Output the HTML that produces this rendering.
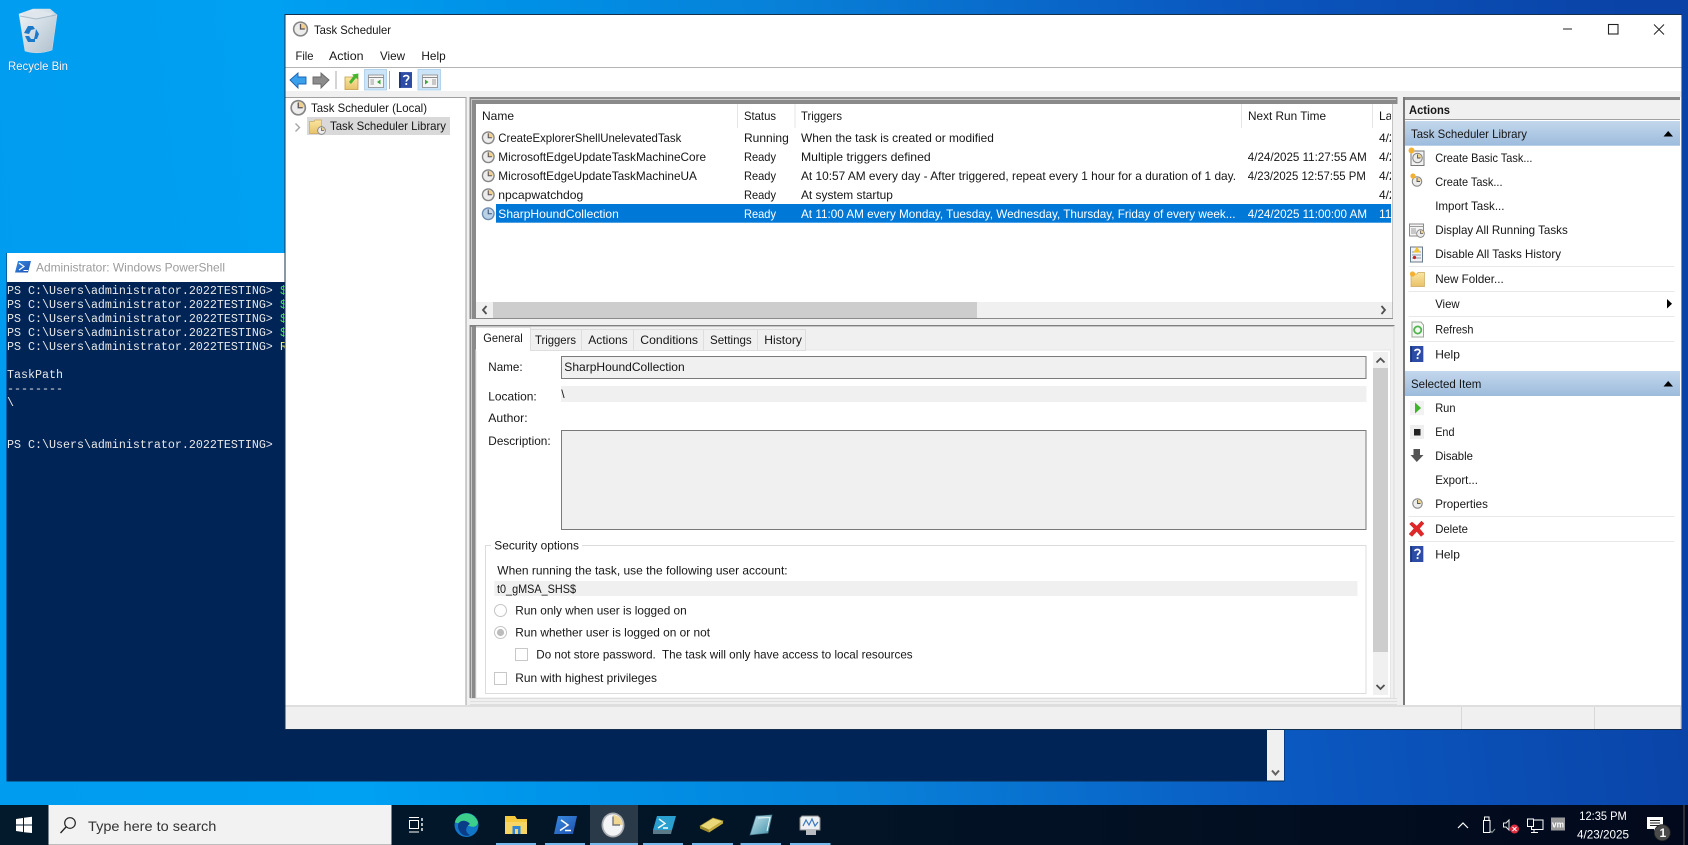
<!DOCTYPE html>
<html lang="en">
<head>
<meta charset="utf-8">
<title>Task Scheduler</title>
<style>
html,body{margin:0;padding:0;width:1688px;height:845px;overflow:hidden;background:#0a5ac4}
svg{display:block;filter:blur(.3px)}
text{font-family:"Liberation Sans",sans-serif;font-size:12px;fill:#161616;white-space:pre}
.m{font-family:"Liberation Mono",monospace;font-size:11.67px;fill:#e8e8e8}
.w{fill:#fff}
</style>
</head>
<body>
<svg xmlns="http://www.w3.org/2000/svg" width="1688" height="845" viewBox="0 0 1688 845">
<defs>
<linearGradient id="wall" gradientUnits="userSpaceOnUse" x1="0" y1="600" x2="1688" y2="400">
<stop offset="0" stop-color="#009cf0"/><stop offset=".2" stop-color="#00a0f2"/><stop offset=".35" stop-color="#0090e6"/><stop offset=".5" stop-color="#0880d8"/><stop offset=".75" stop-color="#0a58c0"/><stop offset="1" stop-color="#0a42a6"/>
</linearGradient>
<linearGradient id="tb" x1="0" y1="0" x2="1" y2="0"><stop offset="0" stop-color="#021a2c"/><stop offset=".5" stop-color="#021426"/><stop offset="1" stop-color="#02091c"/></linearGradient>
<linearGradient id="sec" x1="0" y1="0" x2="0" y2="1"><stop offset="0" stop-color="#c3d7ec"/><stop offset="1" stop-color="#9cbbdc"/></linearGradient>
<linearGradient id="bin" x1="0" y1="0" x2="1" y2="1"><stop offset="0" stop-color="#f0f5f9"/><stop offset="1" stop-color="#aebfcc"/></linearGradient>
<linearGradient id="ps" x1="0" y1="0" x2="1" y2="1"><stop offset="0" stop-color="#3a8de0"/><stop offset="1" stop-color="#1c4fb0"/></linearGradient>
<linearGradient id="fold" x1="0" y1="0" x2="0" y2="1"><stop offset="0" stop-color="#fbe6a2"/><stop offset="1" stop-color="#e8c268"/></linearGradient>
<linearGradient id="note" x1="0" y1="0" x2="1" y2="1"><stop offset="0" stop-color="#c8e8f0"/><stop offset="1" stop-color="#3f8ea8"/></linearGradient>
<symbol id="clk" viewBox="0 0 20 20">
<circle cx="10" cy="10" r="9.6" fill="#858585"/><circle cx="10" cy="10" r="7.6" fill="#ececec"/>
<path d="M10 10V2.8A7.2 7.2 0 0 1 17.2 10Z" fill="#f0d08e"/>
<path d="M10 3.6V10H15.4" fill="none" stroke="#555" stroke-width="1.6"/>
</symbol>
<symbol id="clks" viewBox="0 0 20 20">
<circle cx="10" cy="10" r="9.6" fill="#6d8db0"/><circle cx="10" cy="10" r="7.6" fill="#b9d2ea"/>
<path d="M10 10V2.8A7.2 7.2 0 0 1 17.2 10Z" fill="#c9d8e6"/>
<path d="M10 3.6V10H15.4" fill="none" stroke="#3c5878" stroke-width="1.6"/>
</symbol>
<symbol id="helpb" viewBox="0 0 14 17">
<rect width="14" height="17" fill="#2c4ca6"/><rect x="0" width="2" height="17" fill="#1c3580"/>
<path d="M5 5.4C5 3.2 10.4 3 10.4 5.8 10.4 7.8 7.8 7.8 7.8 10.2" fill="none" stroke="#fff" stroke-width="1.8"/>
<rect x="6.9" y="11.8" width="1.9" height="2.1" fill="#fff"/>
</symbol>
<clipPath id="listc"><rect x="476" y="104" width="915" height="198"/></clipPath>
<clipPath id="psc"><rect x="7" y="282" width="278" height="80"/></clipPath>
</defs>

<!-- wallpaper -->
<rect width="1688" height="845" fill="url(#wall)"/>

<!-- recycle bin -->
<path d="M19 14L33 9H50L57 15L52 50Q38 55 25 51Z" fill="url(#bin)" stroke="#cfdbe4" stroke-width=".6"/>
<path d="M22 13L28 11L33 12L40 10L46 12L53 13L50 17L38 19L24 17Z" fill="#dfe6ec"/>
<path d="M20 16L36 19L56 15" fill="none" stroke="#a8bac8"/>
<path d="M24 33L28 26H33L35 29L31 30L29 34ZM36 29L39 34L37 39L34 39L35 35ZM25 36L29 36L31 39H35V42H28Z" fill="#1c78c8"/>
<text x="8" y="70" textLength="60" lengthAdjust="spacingAndGlyphs" class="w" style="paint-order:stroke;stroke:#0a6cb4;stroke-width:.5px">Recycle Bin</text>

<!-- PowerShell window -->
<rect x="6.5" y="253" width="1278" height="528" fill="#012456"/>
<rect x="6.5" y="780.5" width="1278" height="1" fill="#0a2a50"/>
<rect x="7" y="253" width="1277" height="29" fill="#fff"/>
<rect x="1267" y="282" width="17" height="498.5" fill="#f0f0f0"/>
<path d="M1272 770.5L1275.5 774.5L1279 770.5" fill="none" stroke="#606060" stroke-width="2"/>
<path d="M18 261H31L28 272.5H15Z" fill="url(#ps)"/>
<path d="M19 263L24 266.5L19 270M23.5 270.5H28" fill="none" stroke="#fff" stroke-width="1.1"/>
<text x="36" y="271.5" textLength="189" lengthAdjust="spacingAndGlyphs" style="fill:#9c9c9c">Administrator: Windows PowerShell</text>
<text class="m" x="7" y="294">PS C:\Users\administrator.2022TESTING&gt;</text>
<text class="m" x="7" y="308">PS C:\Users\administrator.2022TESTING&gt;</text>
<text class="m" x="7" y="322">PS C:\Users\administrator.2022TESTING&gt;</text>
<text class="m" x="7" y="336">PS C:\Users\administrator.2022TESTING&gt;</text>
<text class="m" x="7" y="350">PS C:\Users\administrator.2022TESTING&gt;</text>
<g clip-path="url(#psc)">
<text class="m" x="280" y="294" style="fill:#4cf04c">$</text>
<text class="m" x="280" y="308" style="fill:#4cf04c">$</text>
<text class="m" x="280" y="322" style="fill:#4cf04c">$</text>
<text class="m" x="280" y="336" style="fill:#4cf04c">$</text>
<text class="m" x="280" y="350" style="fill:#f4f45a">R</text>
</g>
<text class="m" x="7" y="378">TaskPath</text>
<text class="m" x="7" y="392">--------</text>
<text class="m" x="7" y="406">\</text>
<text class="m" x="7" y="448">PS C:\Users\administrator.2022TESTING&gt;</text>

<!-- Task Scheduler window -->
<rect x="284.5" y="14" width="1397.5" height="716" fill="#14304e"/>
<rect x="285.5" y="15" width="1396" height="714" fill="#f0f0f0"/>
<rect x="285.5" y="15" width="1396" height="76" fill="#fff"/>
<rect x="285.5" y="67" width="1396" height="1" fill="#b4b4b4"/>
<use href="#clk" x="292.5" y="21" width="16" height="16"/>
<text x="314" y="34" textLength="77" lengthAdjust="spacingAndGlyphs">Task Scheduler</text>
<path d="M1563 29H1572" stroke="#222" stroke-width="1"/>
<rect x="1608.5" y="24.5" width="9.5" height="9.5" fill="none" stroke="#222" stroke-width="1.1"/>
<path d="M1654 24.5L1664 34.5M1664 24.5L1654 34.5" stroke="#222" stroke-width="1"/>
<text x="295.5" y="60" textLength="18" lengthAdjust="spacingAndGlyphs">File</text>
<text x="329" y="60" textLength="34.5" lengthAdjust="spacingAndGlyphs">Action</text>
<text x="380" y="60" textLength="25" lengthAdjust="spacingAndGlyphs">View</text>
<text x="421.4" y="60" textLength="24.3" lengthAdjust="spacingAndGlyphs">Help</text>

<!-- toolbar -->
<path d="M290 80L298 73V77H306V84H298V88Z" fill="#3aa0ec" stroke="#1664b4" stroke-width=".9"/>
<path d="M329 80L321 73V77H313V84H321V88Z" fill="#8c8c8c" stroke="#666" stroke-width=".9"/>
<rect x="335.5" y="71" width="1" height="18" fill="#a8a8a8"/>
<path d="M345 77H358V89.5H345Z" fill="url(#fold)" stroke="#c09a48" stroke-width=".8"/>
<path d="M349 82L353.5 76L352 74.5L358.5 73.5L358 79.5L356 78L351 84Z" fill="#46b52e"/>
<rect x="364.5" y="69.5" width="22" height="20.5" fill="#cce4f7" stroke="#a6cdea" stroke-width=".8"/>
<rect x="368.5" y="75" width="15" height="12.5" fill="#f6f6f6" stroke="#8a8a8a" stroke-width=".8"/>
<path d="M368.5 77.5H383.5" stroke="#8a8a8a"/>
<path d="M370.5 80H374M370.5 82H374M370.5 84H374" stroke="#999"/>
<path d="M380.5 79.5L377 82L380.5 84.5Z" fill="#38a838"/>
<rect x="389" y="71" width="1" height="18" fill="#a8a8a8"/>
<use href="#helpb" x="399" y="72" width="13" height="16"/>
<rect x="418" y="69.5" width="22.5" height="20.5" fill="#cce4f7" stroke="#a6cdea" stroke-width=".8"/>
<rect x="422.5" y="75" width="15" height="12.5" fill="#f6f6f6" stroke="#8a8a8a" stroke-width=".8"/>
<path d="M422.5 77.5H437.5" stroke="#8a8a8a"/>
<path d="M432 80H436M432 82H436M432 84H436" stroke="#999"/>
<path d="M425 79.5L428.5 82L425 84.5Z" fill="#38a838"/>

<!-- tree pane -->
<rect x="285.5" y="97" width="181" height="609" fill="#a0a0a0"/>
<rect x="285.5" y="98" width="180" height="607" fill="#fff"/>
<use href="#clk" x="290" y="99.5" width="16.5" height="16.5"/>
<text x="311" y="112" textLength="116" lengthAdjust="spacingAndGlyphs">Task Scheduler (Local)</text>
<path d="M295.5 123.5L299.5 127.5L295.5 131.5" fill="none" stroke="#a6a6a6" stroke-width="1.4"/>
<rect x="307" y="117" width="143" height="18" fill="#d9d9d9"/>
<path d="M309.5 121.5H314L315 120H321.5V133.5H309.5Z" fill="url(#fold)" stroke="#c9a85c" stroke-width=".7"/>
<use href="#clk" x="317" y="126" width="9" height="9"/>
<text x="330" y="130" textLength="116" lengthAdjust="spacingAndGlyphs">Task Scheduler Library</text>

<!-- middle pane frame -->
<rect x="469.5" y="97" width="928" height="222" fill="#8a8a8a"/>
<rect x="471" y="99" width="925" height="1" fill="#c8c8c8"/>
<rect x="471" y="99" width="1" height="220" fill="#c8c8c8"/>
<rect x="1393" y="104" width="4.5" height="215" fill="#f0f0f0"/>
<rect x="476" y="104" width="916.5" height="214" fill="#fff"/>
<rect x="476" y="318" width="917" height="1" fill="#8a8a8a"/>
<path d="M737.5 104V128M795 104V128M1241.5 104V128M1372.5 104V128" stroke="#e5e5e5"/>
<g clip-path="url(#listc)">
<rect x="496" y="204" width="896.5" height="18.7" fill="#0078d7"/>
<text x="482" y="120" textLength="32" lengthAdjust="spacingAndGlyphs">Name</text>
<text x="744" y="120" textLength="32" lengthAdjust="spacingAndGlyphs">Status</text>
<text x="801" y="120" textLength="41" lengthAdjust="spacingAndGlyphs">Triggers</text>
<text x="1248" y="120" textLength="78" lengthAdjust="spacingAndGlyphs">Next Run Time</text>
<text x="1379" y="120">Last Run Time</text>
<use href="#clk" x="481.5" y="131" width="13.5" height="13.5"/>
<use href="#clk" x="481.5" y="150" width="13.5" height="13.5"/>
<use href="#clk" x="481.5" y="169" width="13.5" height="13.5"/>
<use href="#clk" x="481.5" y="188" width="13.5" height="13.5"/>
<use href="#clks" x="481.5" y="207" width="13.5" height="13.5"/>
<text x="498.3" y="142" textLength="183" lengthAdjust="spacingAndGlyphs">CreateExplorerShellUnelevatedTask</text>
<text x="498.3" y="161" textLength="207.8" lengthAdjust="spacingAndGlyphs">MicrosoftEdgeUpdateTaskMachineCore</text>
<text x="498.3" y="180" textLength="198.6" lengthAdjust="spacingAndGlyphs">MicrosoftEdgeUpdateTaskMachineUA</text>
<text x="498.3" y="199" textLength="85" lengthAdjust="spacingAndGlyphs">npcapwatchdog</text>
<text x="498.3" y="218" textLength="120.5" lengthAdjust="spacingAndGlyphs" class="w">SharpHoundCollection</text>
<text x="744" y="142" textLength="44.8" lengthAdjust="spacingAndGlyphs">Running</text>
<text x="744" y="161" textLength="32" lengthAdjust="spacingAndGlyphs">Ready</text>
<text x="744" y="180" textLength="32" lengthAdjust="spacingAndGlyphs">Ready</text>
<text x="744" y="199" textLength="32" lengthAdjust="spacingAndGlyphs">Ready</text>
<text x="744" y="218" textLength="32" lengthAdjust="spacingAndGlyphs" class="w">Ready</text>
<text x="801" y="142" textLength="192.9" lengthAdjust="spacingAndGlyphs">When the task is created or modified</text>
<text x="801" y="161" textLength="129.7" lengthAdjust="spacingAndGlyphs">Multiple triggers defined</text>
<text x="801" y="180" textLength="435" lengthAdjust="spacingAndGlyphs">At 10:57 AM every day - After triggered, repeat every 1 hour for a duration of 1 day.</text>
<text x="801" y="199" textLength="91.9" lengthAdjust="spacingAndGlyphs">At system startup</text>
<text x="801" y="218" textLength="434.5" lengthAdjust="spacingAndGlyphs" class="w">At 11:00 AM every Monday, Tuesday, Wednesday, Thursday, Friday of every week...</text>
<text x="1247.8" y="161" textLength="119" lengthAdjust="spacingAndGlyphs">4/24/2025 11:27:55 AM</text>
<text x="1247.8" y="180" textLength="118" lengthAdjust="spacingAndGlyphs">4/23/2025 12:57:55 PM</text>
<text x="1247.8" y="218" textLength="119.2" lengthAdjust="spacingAndGlyphs" class="w">4/24/2025 11:00:00 AM</text>
<text x="1379" y="142">4/23/2025</text>
<text x="1379" y="161">4/23/2025</text>
<text x="1379" y="180">4/23/2025</text>
<text x="1379" y="199">4/23/2025</text>
<text x="1379" y="218" class="w">11/30/1999</text>
</g>
<rect x="476" y="302" width="916.5" height="16" fill="#f0f0f0"/>
<rect x="493" y="302" width="484" height="16" fill="#cdcdcd"/>
<path d="M486.5 306L483 310L486.5 314" fill="none" stroke="#505050" stroke-width="1.8"/>
<path d="M1381.5 306L1385 310L1381.5 314" fill="none" stroke="#505050" stroke-width="1.8"/>

<!-- bottom pane frame -->
<rect x="469.5" y="325" width="6.5" height="379" fill="#8a8a8a"/>
<rect x="471" y="327" width="1" height="375" fill="#c8c8c8"/>
<rect x="469.5" y="325" width="925" height="1.4" fill="#808080"/>
<rect x="476" y="326.5" width="917.5" height="377" fill="#f0f0f0"/>
<rect x="1393.5" y="326" width="1" height="375" fill="#dcdcdc"/>
<rect x="476" y="350" width="914.5" height="348" fill="#fff" stroke="#e6e6e6" stroke-width="1"/>
<rect x="469.5" y="698" width="928" height="7" fill="#f0f0f0"/>
<path d="M470 698.5H1397M470 701.5H1397M470 704.5H1397" stroke="#dedede" stroke-width="1"/>
<!-- tabs -->
<rect x="530.5" y="329.5" width="51" height="21" fill="#f0f0f0" stroke="#dedede"/>
<rect x="581.5" y="329.5" width="52" height="21" fill="#f0f0f0" stroke="#dedede"/>
<rect x="633.5" y="329.5" width="70" height="21" fill="#f0f0f0" stroke="#dedede"/>
<rect x="703.5" y="329.5" width="54" height="21" fill="#f0f0f0" stroke="#dedede"/>
<rect x="757.5" y="329.5" width="48" height="21" fill="#f0f0f0" stroke="#dedede"/>
<rect x="476" y="327" width="54.5" height="24" fill="#fff"/>
<path d="M476 327.5H530.5V351" fill="none" stroke="#dedede"/>
<text x="483.3" y="342" textLength="39.4" lengthAdjust="spacingAndGlyphs">General</text>
<text x="535" y="344" textLength="41" lengthAdjust="spacingAndGlyphs">Triggers</text>
<text x="588.3" y="344" textLength="39.4" lengthAdjust="spacingAndGlyphs">Actions</text>
<text x="640.3" y="344" textLength="57.7" lengthAdjust="spacingAndGlyphs">Conditions</text>
<text x="710" y="344" textLength="41.7" lengthAdjust="spacingAndGlyphs">Settings</text>
<text x="764.3" y="344" textLength="37.7" lengthAdjust="spacingAndGlyphs">History</text>
<!-- general -->
<text x="488.3" y="371" textLength="34.3" lengthAdjust="spacingAndGlyphs">Name:</text>
<rect x="561.5" y="356.5" width="804.5" height="22" fill="#f0f0f0" stroke="#7a7a7a"/>
<text x="564.3" y="371" textLength="120.4" lengthAdjust="spacingAndGlyphs">SharpHoundCollection</text>
<text x="488.3" y="400.5" textLength="48.4" lengthAdjust="spacingAndGlyphs">Location:</text>
<rect x="561" y="386" width="805.5" height="16" fill="#f0f0f0"/>
<text x="561.3" y="398">\</text>
<text x="488.3" y="422" textLength="39.3" lengthAdjust="spacingAndGlyphs">Author:</text>
<text x="488.3" y="445" textLength="62.3" lengthAdjust="spacingAndGlyphs">Description:</text>
<rect x="561.5" y="430.5" width="804.5" height="99" fill="#f0f0f0" stroke="#7a7a7a"/>
<rect x="485.5" y="545.5" width="880.5" height="148" fill="none" stroke="#dcdcdc"/>
<rect x="491" y="540" width="91" height="10" fill="#fff"/>
<text x="494.3" y="549.3" textLength="84.7" lengthAdjust="spacingAndGlyphs">Security options</text>
<text x="497.3" y="574.5" textLength="290.3" lengthAdjust="spacingAndGlyphs">When running the task, use the following user account:</text>
<rect x="494.3" y="581" width="863.2" height="15" fill="#f0f0f0"/>
<text x="497" y="593" textLength="79" lengthAdjust="spacingAndGlyphs">t0_gMSA_SHS$</text>
<circle cx="500.5" cy="610.5" r="6" fill="#fff" stroke="#c4c4c4"/>
<text x="515.3" y="614.3" textLength="171.4" lengthAdjust="spacingAndGlyphs">Run only when user is logged on</text>
<circle cx="500.5" cy="632.5" r="6" fill="#fff" stroke="#c4c4c4"/><circle cx="500.5" cy="632.5" r="3.6" fill="#bcbcbc"/>
<text x="515.3" y="636.3" textLength="194.7" lengthAdjust="spacingAndGlyphs">Run whether user is logged on or not</text>
<rect x="515.5" y="648.5" width="12" height="12" fill="#fff" stroke="#c8c8c8"/>
<text x="536.3" y="658.3" textLength="376.3" lengthAdjust="spacingAndGlyphs" xml:space="preserve">Do not store password.  The task will only have access to local resources</text>
<rect x="494.5" y="672.5" width="12" height="12" fill="#fff" stroke="#c8c8c8"/>
<text x="515.3" y="682" textLength="141.7" lengthAdjust="spacingAndGlyphs">Run with highest privileges</text>
<!-- v scrollbar -->
<rect x="1373" y="352" width="15" height="343" fill="#f0f0f0"/>
<rect x="1373" y="368" width="15" height="284" fill="#cdcdcd"/>
<path d="M1376.5 362.5L1380.5 358.5L1384.5 362.5" fill="none" stroke="#505050" stroke-width="1.8"/>
<path d="M1376.5 685L1380.5 689L1384.5 685" fill="none" stroke="#505050" stroke-width="1.8"/>

<!-- actions pane -->
<rect x="1403" y="97" width="278" height="608" fill="#fff"/>
<rect x="1403" y="97" width="277" height="3" fill="#8a8a8a"/>
<rect x="1403" y="97" width="2" height="608" fill="#7a7a7a"/>
<rect x="1405" y="100" width="275" height="19.5" fill="#f0f0f0"/>
<rect x="1405" y="119" width="275" height="1" fill="#a0a0a0"/>
<text x="1409" y="114" textLength="41" lengthAdjust="spacingAndGlyphs" style="font-weight:700">Actions</text>
<rect x="1405" y="121" width="275" height="24.7" fill="url(#sec)"/>
<text x="1411" y="138" textLength="116" lengthAdjust="spacingAndGlyphs">Task Scheduler Library</text>
<path d="M1663.5 136.5H1673L1668.2 131Z" fill="#000"/>
<text x="1435.2" y="162" textLength="97.3" lengthAdjust="spacingAndGlyphs">Create Basic Task...</text>
<text x="1435.2" y="186" textLength="67.3" lengthAdjust="spacingAndGlyphs">Create Task...</text>
<text x="1435.2" y="210" textLength="69.3" lengthAdjust="spacingAndGlyphs">Import Task...</text>
<text x="1435.2" y="234" textLength="132.6" lengthAdjust="spacingAndGlyphs">Display All Running Tasks</text>
<text x="1435.2" y="258" textLength="125.8" lengthAdjust="spacingAndGlyphs">Disable All Tasks History</text>
<rect x="1408.5" y="266" width="266" height="1" fill="#e8e8e8"/>
<text x="1435.2" y="283" textLength="68.5" lengthAdjust="spacingAndGlyphs">New Folder...</text>
<rect x="1408.5" y="291" width="266" height="1" fill="#e8e8e8"/>
<text x="1435.2" y="308" textLength="24.4" lengthAdjust="spacingAndGlyphs">View</text>
<path d="M1667 299L1672 303.7L1667 308.5Z" fill="#000"/>
<rect x="1408.5" y="316" width="266" height="1" fill="#e8e8e8"/>
<text x="1435.2" y="333.5" textLength="38.3" lengthAdjust="spacingAndGlyphs">Refresh</text>
<rect x="1408.5" y="341" width="266" height="1" fill="#e8e8e8"/>
<text x="1435.2" y="358.5" textLength="24.7" lengthAdjust="spacingAndGlyphs">Help</text>
<rect x="1405" y="371" width="275" height="25" fill="url(#sec)"/>
<text x="1411" y="388" textLength="70.3" lengthAdjust="spacingAndGlyphs">Selected Item</text>
<path d="M1663.5 386.5H1673L1668.2 381Z" fill="#000"/>
<text x="1435.2" y="412" textLength="20.3" lengthAdjust="spacingAndGlyphs">Run</text>
<text x="1435.2" y="436" textLength="19.3" lengthAdjust="spacingAndGlyphs">End</text>
<text x="1435.2" y="460" textLength="37.7" lengthAdjust="spacingAndGlyphs">Disable</text>
<text x="1435.2" y="484" textLength="42.7" lengthAdjust="spacingAndGlyphs">Export...</text>
<text x="1435.2" y="508" textLength="52.7" lengthAdjust="spacingAndGlyphs">Properties</text>
<rect x="1408.5" y="516" width="266" height="1" fill="#e8e8e8"/>
<text x="1435.2" y="533" textLength="32.7" lengthAdjust="spacingAndGlyphs">Delete</text>
<rect x="1408.5" y="541" width="266" height="1" fill="#e8e8e8"/>
<text x="1435.2" y="558.5" textLength="24.7" lengthAdjust="spacingAndGlyphs">Help</text>
<!-- action icons -->
<rect x="1411" y="151" width="13" height="14.5" fill="#f2f2f2" stroke="#777"/><use href="#clk" x="1412" y="152.5" width="11" height="11"/><circle cx="1411.5" cy="150.5" r="3" fill="#f4b030"/>
<use href="#clk" x="1411.5" y="176" width="11" height="11"/><circle cx="1413" cy="176" r="2.6" fill="#f4b030"/>
<rect x="1409.5" y="224" width="14" height="12" fill="#f4f4f4" stroke="#8a8a8a"/><path d="M1409.5 226.5H1423.5M1411 229H1416M1411 231H1416M1411 233H1416" stroke="#9a9a9a"/><use href="#clk" x="1416" y="229" width="9" height="9"/>
<rect x="1410.5" y="247" width="12" height="15" fill="#f0f2f6" stroke="#6a7a8a"/><path d="M1412 252H1421M1412 255H1421M1412 258H1421" stroke="#8a9aaa"/><path d="M1417 246.5L1420.5 252.5H1413.5Z" fill="#f4c030"/><circle cx="1414.5" cy="257.5" r="1.6" fill="#d02020"/>
<path d="M1411 274H1417L1418 272.5H1424.5V286.5H1411Z" fill="url(#fold)" stroke="#c9a85c" stroke-width=".7"/><circle cx="1412.5" cy="274" r="2.6" fill="#f4b030"/>
<path d="M1412 322H1421L1423.5 325V337H1412Z" fill="#f6f8f4" stroke="#9aa89a"/><circle cx="1417.7" cy="330" r="3.6" fill="none" stroke="#4fb64f" stroke-width="1.8"/>
<use href="#helpb" x="1410" y="346" width="13.5" height="16"/>
<rect x="1410" y="401" width="14" height="14" fill="#f2f2f2"/><path d="M1415 402.5L1421 408L1415 413.5Z" fill="#3fb52a"/>
<rect x="1410" y="425" width="14" height="14" fill="#efefef"/><rect x="1414" y="429" width="6.5" height="6.5" fill="#222"/>
<path d="M1413.5 449H1420V455H1423.5L1416.8 462L1410.5 455H1413.5Z" fill="#555"/>
<use href="#clk" x="1412" y="498" width="11" height="11"/>
<path d="M1412 522L1416.8 526L1421.5 521L1424 523.5L1419.5 528.5L1424 534L1421 536.5L1416.8 531.5L1412 536.5L1409 534L1414 528.5L1409.5 524Z" fill="#e02828" stroke="#c01818" stroke-width=".4"/>
<use href="#helpb" x="1410" y="546" width="13.5" height="16"/>

<!-- status bar -->
<rect x="285.5" y="705" width="1396" height="24" fill="#f0f0f0"/>
<rect x="285.5" y="705" width="1396" height="2" fill="#dedede"/>
<rect x="1461" y="707" width="1" height="22" fill="#d8d8d8"/>
<rect x="1594" y="707" width="1" height="22" fill="#d8d8d8"/>
<rect x="1680" y="707" width="1" height="22" fill="#d8d8d8"/>

<!-- taskbar -->
<rect x="0" y="805" width="1688" height="40" fill="url(#tb)"/>
<path d="M16 819L23 818V824.5H16ZM24 817.8L32 816.8V824.5H24ZM16 825.5H23V832L16 831ZM24 825.5H32V833L24 832.2Z" fill="#fff"/>
<rect x="48.5" y="805" width="343" height="40" fill="#f2f2f2"/>
<rect x="48.5" y="844" width="343" height="1" fill="#bdbdbd"/>
<circle cx="70" cy="823" r="5.3" fill="none" stroke="#222" stroke-width="1.2"/><path d="M66 827L60.5 833" stroke="#222" stroke-width="1.3"/>
<text x="88" y="831" textLength="128.4" lengthAdjust="spacingAndGlyphs" style="font-size:14px;fill:#333">Type here to search</text>
<path d="M409 817.5H419M409 832H419" stroke="#fff"/><rect x="409.5" y="820.5" width="9" height="8" fill="none" stroke="#fff"/><path d="M422 818V821M422 823V826M422 828V831" stroke="#fff" stroke-width="1.4"/>
<!-- edge -->
<circle cx="466.5" cy="825" r="12" fill="#1276c8"/>
<path d="M455 822C457 812 473 809 478 822C477 829 470 827 465 824C460 822 456 824 455 822Z" fill="#3ccf8c"/>
<path d="M458 826C458 820 466 819 470 824C466 826 464 832 470 835C464 838 458 832 458 826Z" fill="#0a3c88"/>
<!-- explorer -->
<path d="M505 816H515L517 819H527V834H505Z" fill="#f4c93e"/>
<rect x="505" y="822" width="22" height="12" fill="#f6d566"/>
<rect x="512.5" y="826" width="8" height="8" fill="#2f86d8"/><rect x="515" y="829" width="3" height="5" fill="#f6d566"/>
<rect x="496" y="843" width="40" height="2" fill="#76b9ed"/>
<!-- powershell -->
<path d="M558 816H577L573 834H554Z" fill="url(#ps)"/>
<path d="M561 820L568 825L560 830.5M565 830.5H571" fill="none" stroke="#fff" stroke-width="1.5"/>
<rect x="545" y="843" width="40" height="2" fill="#76b9ed"/>
<!-- scheduler -->
<rect x="590" y="805" width="48" height="40" fill="#2b3a48"/>
<ellipse cx="613" cy="825" rx="11.5" ry="12.5" fill="#a8acb0"/><ellipse cx="613" cy="825" rx="9.8" ry="10.8" fill="#f2f4f6"/>
<path d="M613 825V815A9.5 10 0 0 1 622.5 825Z" fill="#f0d894"/>
<path d="M613 816.5V825H620" fill="none" stroke="#777" stroke-width="1.4"/>
<rect x="590" y="843" width="48" height="2" fill="#76b9ed"/>
<!-- ps ise -->
<path d="M657 816H676L672 830H653Z" fill="#2aa0d0"/>
<path d="M653 830H672L671 834H653Z" fill="#5a7a8a"/>
<path d="M659 819L665 823.5L658 828M663 828H668" fill="none" stroke="#fff" stroke-width="1.4"/>
<rect x="643" y="843" width="40" height="2" fill="#76b9ed"/>
<!-- yellow -->
<path d="M700 826L713 818L723 821L709 830Z" fill="#e8d878" stroke="#a68e2a" stroke-width=".7"/>
<path d="M700 826L709 830L709 832.5L700 828.5Z" fill="#9d8a2a"/><path d="M709 830L723 821V823.5L709 832.5Z" fill="#c4ad3e"/>
<rect x="692" y="843" width="41" height="2" fill="#76b9ed"/>
<!-- notepad-like -->
<path d="M756 816L772 815L768 833L750 835Z" fill="url(#note)" stroke="#4a7a8a" stroke-width=".7"/>
<path d="M758 818L770 817.5L767 831" fill="none" stroke="#e8f6fa"/>
<rect x="740.5" y="843" width="40.5" height="2" fill="#76b9ed"/>
<!-- perf -->
<path d="M802 816H818L820 818V830H800V818Z" fill="#eef1f4" stroke="#8a8a8a"/>
<path d="M803 826L806 820L809 825L812 819L815 826L818 822" fill="none" stroke="#3a78c0" stroke-width="1.2"/>
<rect x="806" y="830" width="10" height="5" fill="#b8bcc0"/>
<rect x="790" y="843" width="40.5" height="2" fill="#76b9ed"/>
<!-- tray -->
<path d="M1458 828L1463 823L1468 828" fill="none" stroke="#fff" stroke-width="1.2"/>
<path d="M1483.5 820.5V832.5H1490V820.5ZM1484.5 817H1489V820.5H1484.5Z" fill="none" stroke="#fff"/>
<path d="M1490.5 831L1492 832.5L1495 829" fill="none" stroke="#8a9a9a"/>
<path d="M1503.5 823H1506L1509 820V830L1506 827H1503.5Z" fill="none" stroke="#e8e8e8"/>
<circle cx="1514.5" cy="829" r="4.5" fill="#e02c3c"/><path d="M1512.5 827L1516.5 831M1516.5 827L1512.5 831" stroke="#fff"/>
<rect x="1531.5" y="820" width="11.5" height="9.5" fill="none" stroke="#fff"/><rect x="1527.5" y="819" width="6" height="7.5" fill="#020c1e" stroke="#fff"/><path d="M1534 830V832M1531 832.5H1538" stroke="#fff"/>
<rect x="1551" y="817.5" width="14" height="13" fill="#9a9a9a"/><text x="1552" y="827.5" textLength="12" lengthAdjust="spacingAndGlyphs" style="font-size:9px;font-weight:700;fill:#fff">vm</text>
<text x="1579.3" y="820" textLength="47.4" lengthAdjust="spacingAndGlyphs" class="w">12:35 PM</text>
<text x="1577" y="838.3" textLength="52" lengthAdjust="spacingAndGlyphs" class="w">4/23/2025</text>
<path d="M1647 817H1663V829H1657L1654 832V829H1647Z" fill="#fff"/>
<path d="M1650 820.5H1660M1650 823H1660M1650 825.5H1660" stroke="#222"/>
<circle cx="1662.3" cy="832.7" r="8" fill="#4a4a4a" stroke="#222" stroke-width=".8"/>
<text x="1659.5" y="837" style="font-size:12px;font-weight:700;fill:#fff">1</text>
<rect x="1683.5" y="805" width="1" height="40" fill="#555"/>
</svg>
</body>
</html>
